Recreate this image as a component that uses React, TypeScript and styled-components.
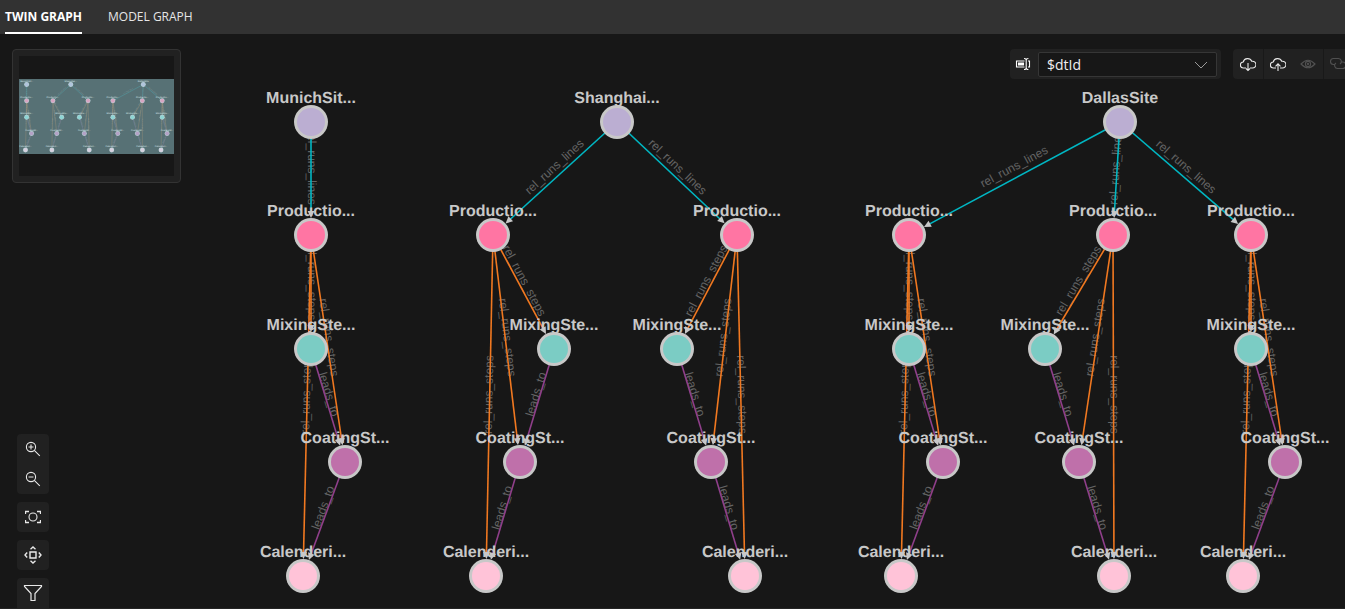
import React from "react";
import styled, { createGlobalStyle, css } from "styled-components";

const GlobalStyle = createGlobalStyle`
  *, *::before, *::after { box-sizing: border-box; }
  body {
    margin: 0;
    background: #171717;
    color: #fff;
    font-family: "Open Sans", "Noto Sans", sans-serif;
  }
`;

const Page = styled.div`
  display: flex;
  flex-direction: column;
  height: 100vh;
  background: #171717;
`;

const TabBar = styled.div`
  display: flex;
  flex: none;
  gap: 26px;
  height: 34px;
  padding: 0 5px;
  background: #323232;
`;

const Tab = styled.button<{ $active?: boolean }>`
  padding: 2px 0 0;
  border: 0;
  border-bottom: 2px solid ${(p) => (p.$active ? "#fff" : "transparent")};
  background: none;
  color: ${(p) => (p.$active ? "#fff" : "#e6e6e6")};
  font-family: inherit;
  font-size: 12px;
  font-weight: ${(p) => (p.$active ? 700 : 400)};
  line-height: 16px;
  cursor: pointer;
`;

const Stage = styled.main`
  position: relative;
  flex: 1;
  min-height: 0;
  overflow: hidden;
  border-bottom: 1px solid #242424;
`;

const GraphCanvas = styled.svg`
  display: block;
  width: 100%;
  height: 100%;
`;

const panel = css`
  background: #212121;
  border-radius: 4px;
`;

const MiniMap = styled.div`
  ${panel}
  position: absolute;
  top: 15px;
  left: 12px;
  padding: 6px;
  border: 1px solid #333;
`;

const MiniMapCanvas = styled.svg`
  display: block;
  width: 155px;
  height: 120px;
  background: #171717;
`;

const TopTools = styled.div`
  position: absolute;
  top: 15px;
  right: 0;
  display: flex;
  gap: 12px;
`;

const PropertyPicker = styled.label`
  ${panel}
  display: flex;
  align-items: center;
  gap: 7px;
  height: 30px;
  padding: 0 4px 0 5px;
`;

const SelectBox = styled.span`
  position: relative;
  display: flex;
  width: 179px;
  height: 25px;
  svg {
    position: absolute;
    top: 5px;
    right: 8px;
    pointer-events: none;
  }
`;

const Select = styled.select`
  width: 100%;
  padding: 1px 28px 0 8px;
  border: 1px solid #363636;
  border-radius: 2px;
  background: #171717;
  color: #f0f0f0;
  appearance: none;
  font-family: inherit;
  font-size: 14px;
`;

const ActionBar = styled.div`
  display: flex;
  width: 112px;
  height: 30px;
  overflow: hidden;
  background: #212121;
  border-radius: 4px 0 0 4px;
`;

const ActionGroup = styled.div`
  display: flex;
  flex: none;
  & + & {
    box-shadow: inset 1px 0 #191919;
  }
`;

const IconButton = styled.button`
  display: flex;
  flex: none;
  align-items: center;
  justify-content: center;
  width: 30px;
  height: 30px;
  padding: 0;
  border: 0;
  background: none;
  color: #e8e8e8;
  cursor: pointer;
  &:disabled {
    color: #505050;
    cursor: default;
  }
`;

const SideTools = styled.div`
  position: absolute;
  bottom: 0;
  left: 17px;
  display: flex;
  flex-direction: column;
  gap: 8px;
`;

const SideGroup = styled.div`
  ${panel}
  display: flex;
  flex-direction: column;
  align-items: center;
  width: 32px;
  &:last-child {
    border-radius: 4px 4px 0 0;
  }
`;

const NodeLabel = styled.text`
  fill: #c8c8c8;
  font-family: "Liberation Sans", Arial, sans-serif;
  font-size: 16px;
  font-weight: 700;
  text-anchor: middle;
  text-rendering: geometricPrecision;
`;

const EdgeLabel = styled.text`
  fill: #646464;
  font-family: "Liberation Sans", Arial, sans-serif;
  font-size: 12px;
  text-anchor: middle;
  text-rendering: geometricPrecision;
`;

type Kind = "site" | "line" | "mixing" | "coating" | "calender";

const kinds: Record<Kind, { y: number; color: string; label: string }> = {
  site: { y: 88, color: "#bbaed2", label: "" },
  line: { y: 201, color: "#ff75a3", label: "Productio..." },
  mixing: { y: 315, color: "#7bccc4", label: "MixingSte..." },
  coating: { y: 428, color: "#bf70aa", label: "CoatingSt..." },
  calender: { y: 542, color: "#ffc3d8", label: "Calenderi..." },
};

const edgeColors = { rel_runs_lines: "#00b7c3", rel_runs_steps: "#f07820", leads_to: "#8f3f8a" };

interface GraphNode { x: number; kind: Kind; label?: string }
interface GraphEdge { from: GraphNode; to: GraphNode; name: keyof typeof edgeColors }

const sites = [
  { x: 311, label: "MunichSit...", lines: [[311, 311, 345, 303]] },
  { x: 617, label: "Shanghai...", lines: [[493, 554, 520, 486], [737, 677, 711, 745]] },
  { x: 1120, label: "DallasSite", lines: [[909, 909, 943, 901], [1113, 1045, 1079, 1114], [1251, 1251, 1285, 1243]] },
];

const nodes: GraphNode[] = [];
const edges: GraphEdge[] = [];

sites.forEach(({ x, label, lines }) => {
  const site: GraphNode = { x, label, kind: "site" };
  nodes.push(site);
  lines.forEach(([lineX, mixingX, coatingX, calenderX]) => {
    const line: GraphNode = { x: lineX, kind: "line" };
    const mixing: GraphNode = { x: mixingX, kind: "mixing" };
    const coating: GraphNode = { x: coatingX, kind: "coating" };
    const calender: GraphNode = { x: calenderX, kind: "calender" };
    nodes.push(line, mixing, coating, calender);
    edges.push({ from: site, to: line, name: "rel_runs_lines" });
    [mixing, coating, calender].forEach((to) => edges.push({ from: line, to, name: "rel_runs_steps" }));
    edges.push({ from: mixing, to: coating, name: "leads_to" }, { from: coating, to: calender, name: "leads_to" });
  });
});

const RADIUS = 17;
const ARROW = 7;

function geometry({ from, to }: GraphEdge) {
  const y1 = kinds[from.kind].y;
  const y2 = kinds[to.kind].y;
  const dx = to.x - from.x;
  const dy = y2 - y1;
  const length = Math.hypot(dx, dy);
  const direction = (Math.atan2(dy, dx) * 180) / Math.PI;
  return {
    x1: from.x, y1, length, direction,
    midX: (from.x + to.x) / 2,
    midY: (y1 + y2) / 2,
    labelAngle: direction > 90 ? direction - 180 : direction,
  };
}

function Graph() {
  return (
    <g id="twin-graph">
      {edges.map((edge, i) => {
        const g = geometry(edge);
        return (
          <EdgeLabel key={i} dy="3" transform={`translate(${g.midX} ${g.midY - 11}) rotate(${g.labelAngle})`}>
            {edge.name}
          </EdgeLabel>
        );
      })}
      {edges.map((edge, i) => {
        const g = geometry(edge);
        const tip = g.length - RADIUS;
        return (
          <g key={i} transform={`translate(${g.x1} ${g.y1}) rotate(${g.direction})`}>
            <line x2={tip - ARROW + 1} stroke={edgeColors[edge.name]} strokeWidth="1.6" />
            <path d={`M${tip} 0l${-ARROW} -3.4v6.8z`} fill="#c8c8c8" />
          </g>
        );
      })}
      {nodes.map((node, i) => {
        const { y, color, label } = kinds[node.kind];
        return (
          <g key={i}>
            <circle cx={node.x} cy={y} r={RADIUS} fill="#c8c8c8" />
            <circle cx={node.x} cy={y} r={RADIUS - 3} fill={color} />
            <NodeLabel x={node.x} y={y - 19}>{node.label ?? label}</NodeLabel>
          </g>
        );
      })}
    </g>
  );
}

function Icon({ size = 16, children }: { size?: number; children: React.ReactNode }) {
  return (
    <svg width={size} height={size} viewBox={`0 0 ${size} ${size}`} fill="none" stroke="currentColor" strokeWidth="1.1" aria-hidden="true">
      {children}
    </svg>
  );
}

const cloud = "M6 12H3.5a3 3 0 0 1-.3-6A4.6 4.6 0 0 1 11.8 5.3A3.4 3.4 0 1 1 12.2 12H10";

export default function App() {
  return (
    <>
      <GlobalStyle />
      <Page>
        <TabBar role="tablist">
          <Tab role="tab" aria-selected="true" $active>TWIN GRAPH</Tab>
          <Tab role="tab" aria-selected="false">MODEL GRAPH</Tab>
        </TabBar>
        <Stage>
          <GraphCanvas role="img" aria-label="Twin graph">
            <Graph />
          </GraphCanvas>

          <MiniMap>
            <MiniMapCanvas viewBox="0 0 155 120" aria-hidden="true">
              <clipPath id="minimap-view"><rect y="23" width="155" height="75" /></clipPath>
              <g clipPath="url(#minimap-view)">
                <use href="#twin-graph" transform="translate(-37.2 15.8) scale(0.1442)" />
              </g>
              <rect y="23" width="155" height="75" fill="#a7dfe8" fillOpacity="0.45" />
            </MiniMapCanvas>
          </MiniMap>

          <TopTools>
            <PropertyPicker aria-label="Display name property">
              <Icon>
                <path d="M9.5 5H1.5v6h8M13 5h1.5v6H13" />
                <path d="M3.5 7h5v2h-5z" fill="currentColor" />
                <path d="M9 2.5q2.2 0 2.2 1.5v8q0 1.5-2.2 1.5M13.4 2.5q-2.2 0-2.2 1.5v8q0 1.5 2.2 1.5" />
              </Icon>
              <SelectBox>
                <Select defaultValue="$dtId" aria-label="Display name property">
                  <option>$dtId</option>
                </Select>
                <svg width="16" height="16" viewBox="0 0 16 16" fill="none" stroke="#9a9a9a" aria-hidden="true">
                  <path d="M2 5l6 6 6-6" />
                </svg>
              </SelectBox>
            </PropertyPicker>
            <ActionBar>
              <ActionGroup>
                <IconButton aria-label="Import graph">
                  <Icon><path d={cloud} /><path d="M8 7v7.5M6 12.5l2 2 2-2" /></Icon>
                </IconButton>
              </ActionGroup>
              <ActionGroup>
                <IconButton aria-label="Export graph">
                  <Icon><path d={cloud} /><path d="M8 15V8M5.5 10.3L8 7.8l2.5 2.5" /></Icon>
                </IconButton>
                <IconButton aria-label="Show hidden twins" disabled>
                  <Icon>
                    <path d="M1 8Q8 .5 15 8Q8 15.5 1 8z" />
                    <circle cx="8" cy="8" r="2.6" />
                    <circle cx="8" cy="8" r="0.6" />
                  </Icon>
                </IconButton>
              </ActionGroup>
              <ActionGroup>
                <IconButton aria-label="Relationships" disabled>
                  <Icon size={18}>
                    <path d="M6 9.5H4.5a3 3 0 0 1 0-6h5a3 3 0 0 1 1.5 5.5" />
                    <path d="M12 7h1.5a3 3 0 0 1 0 6.500h-5A3 3 0 0 1 7 8" />
                  </Icon>
                </IconButton>
              </ActionGroup>
            </ActionBar>
          </TopTools>

          <SideTools>
            <SideGroup>
              <IconButton aria-label="Zoom in">
                <Icon><circle cx="6" cy="6" r="4.6" /><path d="M9.3 9.3l5.5 5.5M3.5 6h5M6 3.5v5" /></Icon>
              </IconButton>
              <IconButton aria-label="Zoom out">
                <Icon><circle cx="6" cy="6" r="4.6" /><path d="M9.3 9.3l5.5 5.5M3.5 6h5" /></Icon>
              </IconButton>
            </SideGroup>
            <SideGroup>
              <IconButton aria-label="Zoom to fit">
                <Icon>
                  <circle cx="8" cy="8" r="4" />
                  <path d="M.5 5V2.5H4M12 2.5h3.5V5M15.5 11v2.5H12M4 13.5H.5V11" strokeWidth="1.3" />
                </Icon>
              </IconButton>
            </SideGroup>
            <SideGroup>
              <IconButton aria-label="Center graph">
                <Icon size={18}>
                  <path d="M6 6h6v6H6z" strokeWidth="1.4" />
                  <path d="M6.5 3.2L9 1l2.5 2.2M6.5 14.8L9 17l2.5-2.2M3.2 6.5L1 9l2.2 2.5M14.8 6.5L17 9l-2.2 2.5" strokeWidth="1.4" />
                </Icon>
              </IconButton>
            </SideGroup>
            <SideGroup>
              <IconButton aria-label="Filter">
                <Icon size={20}><path d="M1.5 2.5h17v1L12 10.5v7H8v-7L1.5 3.5z" strokeWidth="1.2" /></Icon>
              </IconButton>
            </SideGroup>
          </SideTools>
        </Stage>
      </Page>
    </>
  );
}
